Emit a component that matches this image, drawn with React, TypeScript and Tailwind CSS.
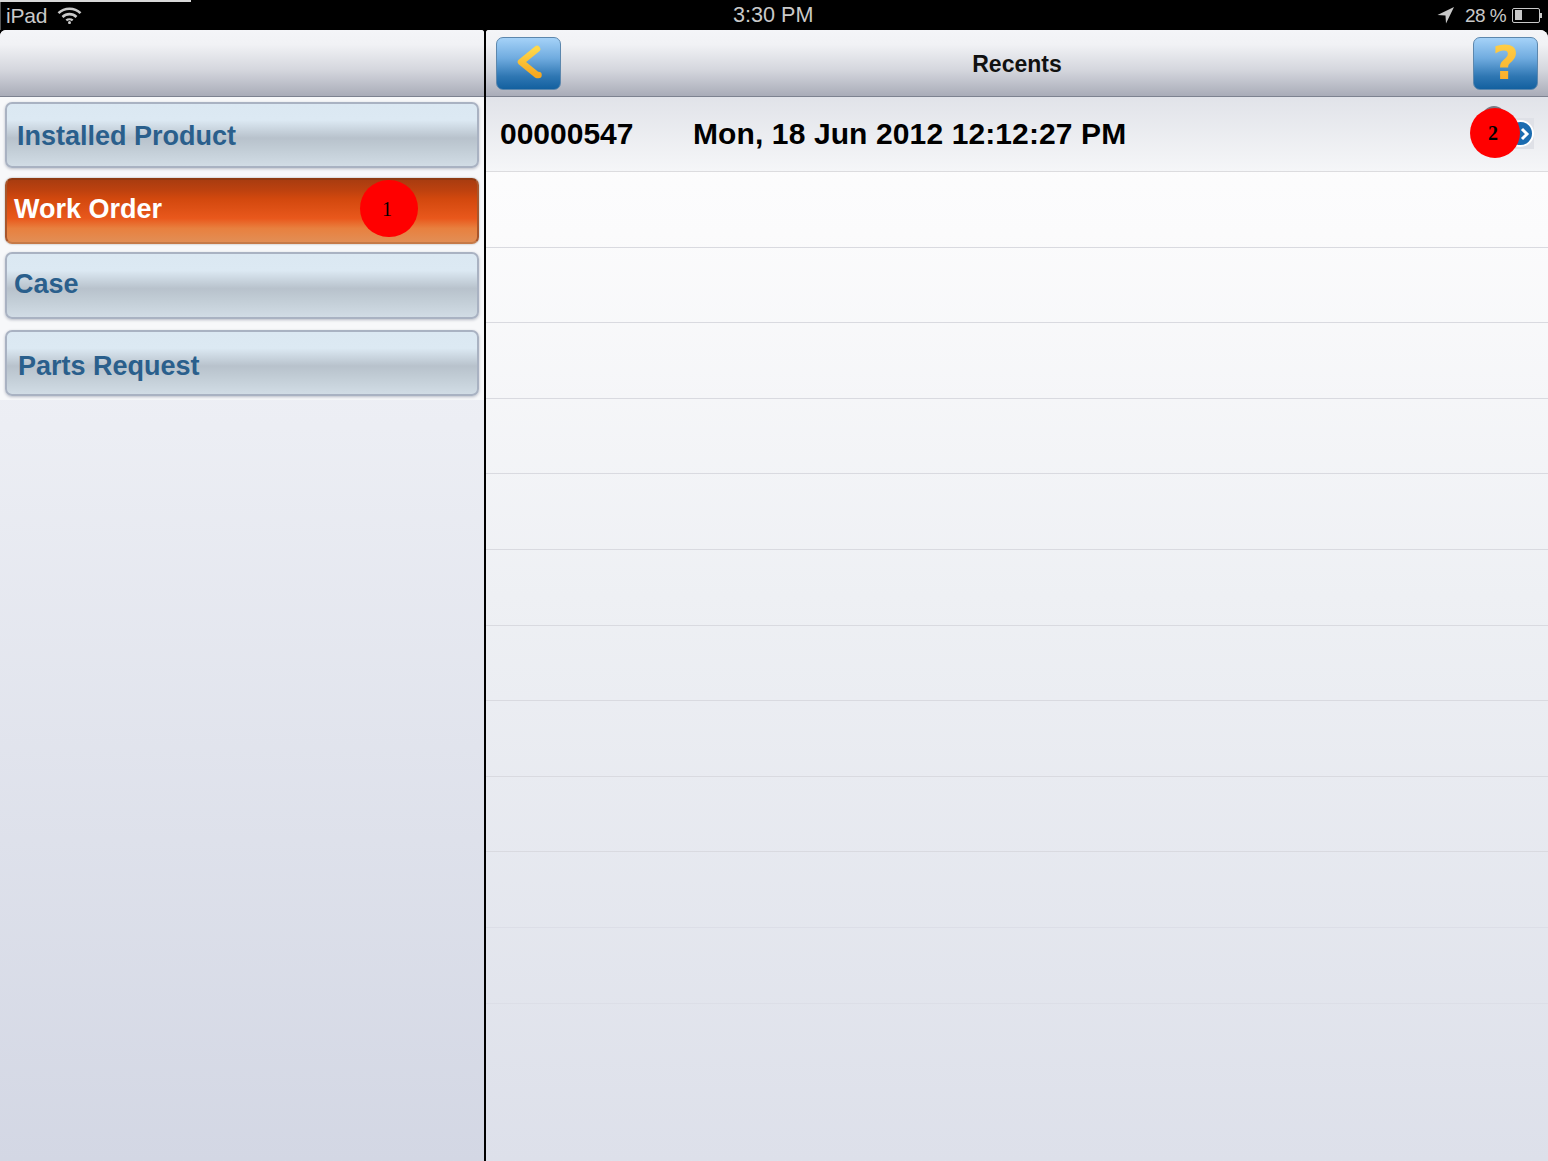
import React from "react";

function MenuButton({ label, active, pad, my, h, top }: { label: string; active?: boolean; pad: string; my: string; h: string; top: string }) {
  return (
    <div className={`flex items-center ${h} ${my} mx-[5px] rounded-[7px] border-2 ${active ? "border-t-[#8f3a12] border-x-[#a8562c] border-b-[#c67a48] bg-[linear-gradient(180deg,#a93c10_0%,#bc410f_16%,#d2480e_30%,#e9581c_62%,#e8803f_78%,#e28e55_100%)] shadow-[0_0_2px_#a0a0a0]" : "border-[#a9b2c2] bg-[linear-gradient(180deg,#dbe8f2_0%,#dce9f3_26%,#b8c2cc_55%,#c0cbd4_70%,#d1dce5_100%)] shadow-[0_1px_3px_#b8bcc6]"}`}>
      <span className={`${pad} ${top} text-[27px] leading-none font-bold font-['Liberation_Sans',sans-serif] ${active ? "text-white" : "text-[#2a5f8c]"}`}>
        {label}
      </span>
    </div>
  );
}

const headerBg = "bg-[linear-gradient(180deg,#f4f5f8_0%,#f1f2f5_22%,#d5d7de_60%,#a9acb8_100%)]";

function GlossyButton({ children }: { children: React.ReactNode }) {
  return (
    <div className="w-[65px] h-[53px] rounded-[7px] border border-[#5c87ad] bg-[linear-gradient(180deg,#a5d2f8_0%,#6fabdf_40%,#2f77b3_75%,#13609f_100%)] flex items-center justify-center">
      {children}
    </div>
  );
}

export default function App() {
  return (
    <div className="w-[1548px] h-[1161px] bg-black overflow-hidden flex flex-col font-['Liberation_Sans',sans-serif]">
      {/* status bar */}
      <div className="relative h-[30px] shrink-0 flex items-center justify-between text-[#c9c9c9] pr-[6px] pl-[6px] border-l border-l-[#555]">
        <div className="absolute -left-px top-0 w-[191px] h-[2px] bg-[#d8d8d8]" />
        <div className="flex items-center gap-[10px] -ml-px">
          <span className="text-[21px] leading-none tracking-[-0.2px]">iPad</span>
          <svg width="25" height="18" viewBox="0 0 25 18" fill="none" stroke="#c9c9c9" strokeLinecap="butt">
            <path d="M1.5 7.2C7.5 1.2 17.5 1.2 23.5 7.2" strokeWidth="2.6" />
            <path d="M5.5 11C9.5 7.2 15.5 7.2 19.5 11" strokeWidth="2.6" />
            <path d="M9.3 14.4C11 13 14 13 15.7 14.4" strokeWidth="2.4" />
            <circle cx="12.5" cy="16.6" r="1.5" fill="#c9c9c9" stroke="none" />
          </svg>
        </div>
        <span className="absolute left-[732px] top-[3px] text-[21.6px] leading-[24px] text-[#c9c9c9]">3:30 PM</span>
        <div className="flex items-center">
          <svg width="18" height="18" viewBox="0 0 18 18" className="mr-[10px]">
            <path d="M17 1L0.5 9L8.5 9.5L9 17.5Z" fill="#c9c9c9" />
          </svg>
          <span className="text-[19px] leading-none tracking-[-0.6px] mr-[6px]">28 %</span>
          <div className="flex items-center">
            <div className="w-[28px] h-[15px] border border-[#c9c9c9] rounded-[2px] p-[1.5px]">
              <div className="w-[7px] h-full bg-[#c9c9c9]" />
            </div>
            <div className="w-[2px] h-[5px] bg-[#c9c9c9]" />
          </div>
        </div>
      </div>

      {/* content */}
      <div className="flex-1 flex min-h-0 gap-[2px]">
        {/* left */}
        <div className="w-[484px] shrink-0 flex flex-col rounded-tl-[6px] rounded-tr-[3px] overflow-hidden bg-[linear-gradient(180deg,#f6f7fb_0%,#eceef4_35%,#d3d7e4_100%)]">
          <div className={`h-[67px] shrink-0 border-b border-[#7d8290] ${headerBg}`} />
          <div className="pt-[5px] pb-[4px] bg-[#f7f8fa]">
            <MenuButton label="Installed Product" pad="pl-[10px]" top="mt-[3px]" my="mb-[10px]" h="h-[66px]" />
            <div className="relative">
              <MenuButton label="Work Order" active pad="pl-[7px]" top="-mt-[3px]" my="mb-[8px]" h="h-[66px]" />
              <div className="absolute left-[360px] top-[2px] w-[58px] h-[57px] rounded-full bg-[#ff0000] flex items-center justify-center pr-[4px] text-[20px] text-black font-['Liberation_Serif',serif]">1</div>
            </div>
            <MenuButton label="Case" pad="pl-[7px]" top="-mt-[2px]" my="mb-[11px]" h="h-[67px]" />
            <MenuButton label="Parts Request" pad="pl-[11px]" top="mt-[7px]" my="" h="h-[66px]" />
          </div>
        </div>

        {/* right */}
        <div className="flex-1 flex flex-col rounded-tr-[8px] rounded-tl-[3px] overflow-hidden bg-[linear-gradient(180deg,#ffffff_0%,#fbfbfc_18%,#eef0f4_50%,#dde0ea_100%)]">
          <div className={`h-[67px] shrink-0 border-b border-[#7d8290] flex items-center justify-between pl-[10px] pr-[10px] ${headerBg}`}>
            <GlossyButton>
              <svg width="28" height="38" viewBox="0 0 28 38" fill="none">
                <defs>
                  <linearGradient id="chev" x1="0" y1="0" x2="0" y2="1">
                    <stop offset="0" stopColor="#ffd84a" />
                    <stop offset="1" stopColor="#f6a821" />
                  </linearGradient>
                </defs>
                <path d="M22 5L6 18L22 31L23.5 31" stroke="url(#chev)" strokeWidth="6.5" strokeLinejoin="round" strokeLinecap="round" />
              </svg>
            </GlossyButton>
            <span className="text-[23px] leading-none font-bold text-[#111] mt-[3px]">Recents</span>
            <GlossyButton>
              <span className="text-[46px] leading-none font-bold font-['DejaVu_Sans',sans-serif] bg-[linear-gradient(180deg,#ffd24a,#f9a825)] bg-clip-text text-transparent">?</span>
            </GlossyButton>
          </div>

          <div className="relative h-[75px] shrink-0 border-b border-[#dcdcdf] flex items-center pl-[14px] text-[30px] font-bold text-black bg-[linear-gradient(180deg,#e1e3e9_0%,#f5f6f8_100%)]">
            <span className="leading-none w-[193px]">00000547</span>
            <span className="leading-none tracking-[0.11px]">Mon, 18 Jun 2012 12:12:27 PM</span>
            <div className="absolute left-[1029px] top-[21px] w-[19px] h-[31px] bg-[#dfe1e7] flex items-center justify-end">
              <div className="w-[27px] h-[27px] shrink-0 rounded-full bg-[#1b6cb0] border-2 border-white flex items-center justify-center">
                <svg width="10" height="14" viewBox="0 0 10 14" fill="none" className="ml-[8px]">
                  <path d="M2 2L7 7L2 12" stroke="#fff" strokeWidth="3" />
                </svg>
              </div>
            </div>
            <div className="absolute left-[996px] top-[9px] w-[24px] h-[24px] rounded-full bg-[#777b84]" />
            <div className="absolute left-[984px] top-[11px] w-[50px] h-[50px] rounded-full bg-[#ff0000] flex items-center justify-center pr-[4px] text-[20px] text-black font-['Liberation_Serif',serif]">2</div>
          </div>

          {["a","b","c","d","e","f","g","h","i"].map((k) => (
            <div key={k} className="h-[75.6px] shrink-0 border-b border-[#d9dae0]" />
          ))}
          {["j","k"].map((k) => (
            <div key={k} className="h-[75.6px] shrink-0 border-b border-[#dcdee7]" />
          ))}
        </div>
      </div>
    </div>
  );
}
